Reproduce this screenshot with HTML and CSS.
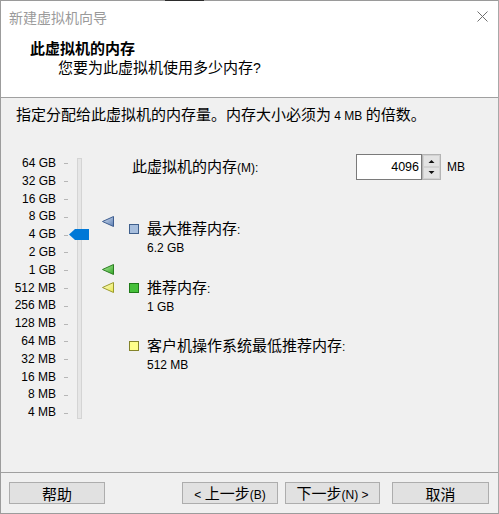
FILE: index.html
```html
<!DOCTYPE html>
<html lang="zh-CN">
<head>
<meta charset="utf-8">
<title>新建虚拟机向导</title>
<link rel="stylesheet" href="styles.css">
</head>
<body>
<div class="window">
  <div class="edge"></div>
  <div class="titlebar">
    <span class="title">新建虚拟机向导</span>
    <svg class="close" width="11" height="11" viewBox="0 0 11 11"><path d="M0.5 0.5L10.5 10.5M10.5 0.5L0.5 10.5" stroke="#6f6f6f" stroke-width="1"/></svg>
  </div>
  <div class="header">
    <div class="h-title">此虚拟机的内存</div>
    <div class="h-sub">您要为此虚拟机使用多少内存<span class="en">?</span></div>
  </div>
  <div class="content">
    <p class="intro">指定分配给此虚拟机的内存量。内存大小必须为<span class="en"> 4 MB </span>的倍数。</p>
    <div class="main">
      <div class="slider">
        <ul class="scale en">
          <li>64 GB</li><li>32 GB</li><li>16 GB</li><li>8 GB</li><li>4 GB</li>
          <li>2 GB</li><li>1 GB</li><li>512 MB</li><li>256 MB</li><li>128 MB</li>
          <li>64 MB</li><li>32 MB</li><li>16 MB</li><li>8 MB</li><li>4 MB</li>
        </ul>
        <div class="ticks">
          <i></i><i></i><i></i><i></i><i></i><i></i><i></i><i></i><i></i><i></i><i></i><i></i><i></i><i></i><i></i>
        </div>
        <div class="track"></div>
        <svg class="thumb" width="20" height="11" viewBox="0 0 20 11"><polygon points="0,5.5 6,0 20,0 20,11 6,11" fill="#0078d7"/></svg>
        <svg class="marker marker-max" width="12" height="11" viewBox="0 0 12 11">
          <defs><linearGradient id="gb" x1="0" y1="0" x2="1" y2="1"><stop offset="0" stop-color="#dbe5f3"/><stop offset="1" stop-color="#5a7db3"/></linearGradient></defs>
          <polygon points="0.5,5.5 11.5,0.5 11.5,10.5" fill="url(#gb)" stroke="#3d5d8f" stroke-width="1" stroke-linejoin="round"/>
        </svg>
        <svg class="marker marker-rec" width="12" height="11" viewBox="0 0 12 11">
          <defs><linearGradient id="gg" x1="0" y1="0" x2="1" y2="1"><stop offset="0" stop-color="#b9f0a8"/><stop offset="1" stop-color="#2fa522"/></linearGradient></defs>
          <polygon points="0.5,5.5 11.5,0.5 11.5,10.5" fill="url(#gg)" stroke="#2b7d22" stroke-width="1" stroke-linejoin="round"/>
        </svg>
        <svg class="marker marker-min" width="12" height="11" viewBox="0 0 12 11">
          <defs><linearGradient id="gy" x1="0" y1="0" x2="1" y2="1"><stop offset="0" stop-color="#ffffd8"/><stop offset="1" stop-color="#e6e64a"/></linearGradient></defs>
          <polygon points="0.5,5.5 11.5,0.5 11.5,10.5" fill="url(#gy)" stroke="#9a9a2c" stroke-width="1" stroke-linejoin="round"/>
        </svg>
      </div>
      <div class="settings">
        <div class="mem-row">
          <label class="mem-label" for="mem">此虚拟机的内存<span class="en">(M):</span></label>
          <input class="spin-input" id="mem" type="text" value="4096">
          <svg class="spin-btns" width="19" height="26" viewBox="0 0 19 26">
            <rect x="0.5" y="0.5" width="18" height="25" fill="#ececec" stroke="#b4b4b4"/>
            <rect x="1.5" y="1.5" width="16" height="11" fill="#e3e3e3" stroke="#d2d2d2"/>
            <rect x="1.5" y="13.5" width="16" height="11" fill="#e3e3e3" stroke="#d2d2d2"/>
            <polygon points="6.5,9 12.5,9 9.5,6" fill="#111"/>
            <polygon points="6.5,17 12.5,17 9.5,20" fill="#111"/>
          </svg>
          <span class="unit en">MB</span>
        </div>
        <ul class="legend">
          <li>
            <span class="sw sw-max"></span>
            <div>
              <div class="lg-title">最大推荐内存<span class="en">:</span></div>
              <div class="lg-val en">6.2 GB</div>
            </div>
          </li>
          <li>
            <span class="sw sw-rec"></span>
            <div>
              <div class="lg-title">推荐内存<span class="en">:</span></div>
              <div class="lg-val en">1 GB</div>
            </div>
          </li>
          <li>
            <span class="sw sw-min"></span>
            <div>
              <div class="lg-title">客户机操作系统最低推荐内存<span class="en">:</span></div>
              <div class="lg-val en">512 MB</div>
            </div>
          </li>
        </ul>
      </div>
    </div>
  </div>
  <div class="footer">
    <button class="btn btn-help">帮助</button>
    <button class="btn btn-back"><span class="en">&lt; </span>上一步<span class="en">(B)</span></button>
    <button class="btn btn-next">下一步<span class="en">(N) &gt;</span></button>
    <button class="btn btn-cancel">取消</button>
  </div>
</div>
</body>
</html>
```

FILE: styles.css
```css
* { box-sizing: border-box; }

html, body {
  margin: 0;
  padding: 0;
  background: #ffffff;
}

body {
  font-family: "Noto Sans CJK SC", sans-serif;
  font-size: 15px;
  color: #000;
}

.en {
  font-family: "Liberation Sans", "Noto Sans CJK SC", sans-serif;
  font-size: 12px;
}

.window {
  width: 499px;
  height: 514px;
  display: flex;
  flex-direction: column;
  background: #f0f0f0;
  border-left: 1px solid #9c9c9c;
  border-right: 1px solid #a8a8a8;
  border-bottom: 1px solid #9c9c9c;
}

.edge {
  height: 1px;
  background: linear-gradient(to right, #9a9a9a 164px, #2b2b2b 164px, #2b2b2b 203px, #9a9a9a 203px);
}

.titlebar {
  height: 32px;
  background: #fff;
  display: flex;
  align-items: center;
  justify-content: space-between;
  padding: 0 10px 0 8px;
}

.title {
  font-size: 14px;
  line-height: 20px;
  color: #9a9a9a;
  margin-top: -1px;
}

.close {
  display: block;
  margin-top: -1px;
}

.header {
  height: 65px;
  background: #fff;
  border-bottom: 1px solid #a0a0a0;
  padding-top: 6px;
}

.h-title {
  font-weight: 700;
  line-height: 18px;
  padding-left: 29px;
}

.h-sub {
  line-height: 20px;
  padding-left: 57px;
}

.h-sub .en {
  font-size: 14px;
}

.content {
  flex: 1;
  display: flex;
  flex-direction: column;
}

.intro {
  margin: 6px 0 0;
  padding-left: 15px;
  line-height: 20px;
}

.main {
  display: flex;
  margin-top: 28px;
}

.slider {
  position: relative;
  width: 128px;
  height: 268px;
  display: flex;
  margin-top: 1px;
}

.scale {
  list-style: none;
  margin: 0;
  padding: 0;
  width: 55px;
  text-align: right;
  display: flex;
  flex-direction: column;
}

.scale li {
  height: 17.8px;
  line-height: 17.8px;
  white-space: nowrap;
}

.ticks {
  width: 4px;
  margin-left: 8px;
  display: flex;
  flex-direction: column;
}

.ticks i {
  display: block;
  height: 17.8px;
  background: linear-gradient(#b6b6b6, #b6b6b6) no-repeat 0 50% / 4px 1px;
}

.track {
  width: 5px;
  height: 261px;
  margin: 3px 0 0 9px;
  background: #e6e6e6;
  border: 1px solid #d4d4d4;
}

.thumb {
  position: absolute;
  left: 68px;
  top: 74px;
  display: block;
}

.marker {
  position: absolute;
  left: 101px;
  display: block;
}

.marker-max { top: 61px; }
.marker-rec { top: 109px; }
.marker-min { top: 127px; }

.settings {
  flex: 1;
}

.mem-row {
  display: flex;
  align-items: center;
  height: 26px;
}

.mem-label {
  width: 227px;
  padding-left: 3px;
  line-height: 20px;
}

.spin-input {
  width: 66px;
  height: 26px;
  margin: 0;
  border: 1px solid #7a7a7a;
  background: #fff;
  padding: 0 2px 0 0;
  text-align: right;
  font-family: "Liberation Sans", sans-serif;
  font-size: 12.5px;
  color: #000;
  outline: none;
}

.spin-btns {
  display: block;
}

.unit {
  margin-left: 6px;
}

.legend {
  list-style: none;
  margin: 39px 0 0;
  padding: 0;
  display: flex;
  flex-direction: column;
  gap: 20.5px;
}

.legend li {
  display: flex;
  align-items: flex-start;
}

.sw {
  width: 10px;
  height: 10px;
  margin: 5px 8px 0 0;
  border: 1px solid;
  flex: none;
}

.sw-max { background: #a7bedd; border-color: #3f5f8c; }
.sw-rec { background: #46c03a; border-color: #1f7a18; }
.sw-min { background: #ffff8a; border-color: #84842a; }

.lg-title {
  line-height: 18px;
}

.lg-val {
  line-height: 18px;
}

.footer {
  height: 41px;
  border-top: 1px solid #a0a0a0;
  display: flex;
  align-items: flex-start;
  padding: 9px 9px 0 8px;
}

.btn {
  height: 22px;
  margin: 0;
  padding: 0;
  border: 1px solid #adadad;
  background: #e1e1e1;
  font-family: "Noto Sans CJK SC", sans-serif;
  font-size: 15px;
  line-height: 19px;
  color: #000;
  white-space: nowrap;
}

.btn-help { width: 96px; }
.btn-back { width: 96px; margin-left: auto; }
.btn-next { width: 95px; margin-left: 7px; }
.btn-cancel { width: 97px; margin-left: 12px; }
```
